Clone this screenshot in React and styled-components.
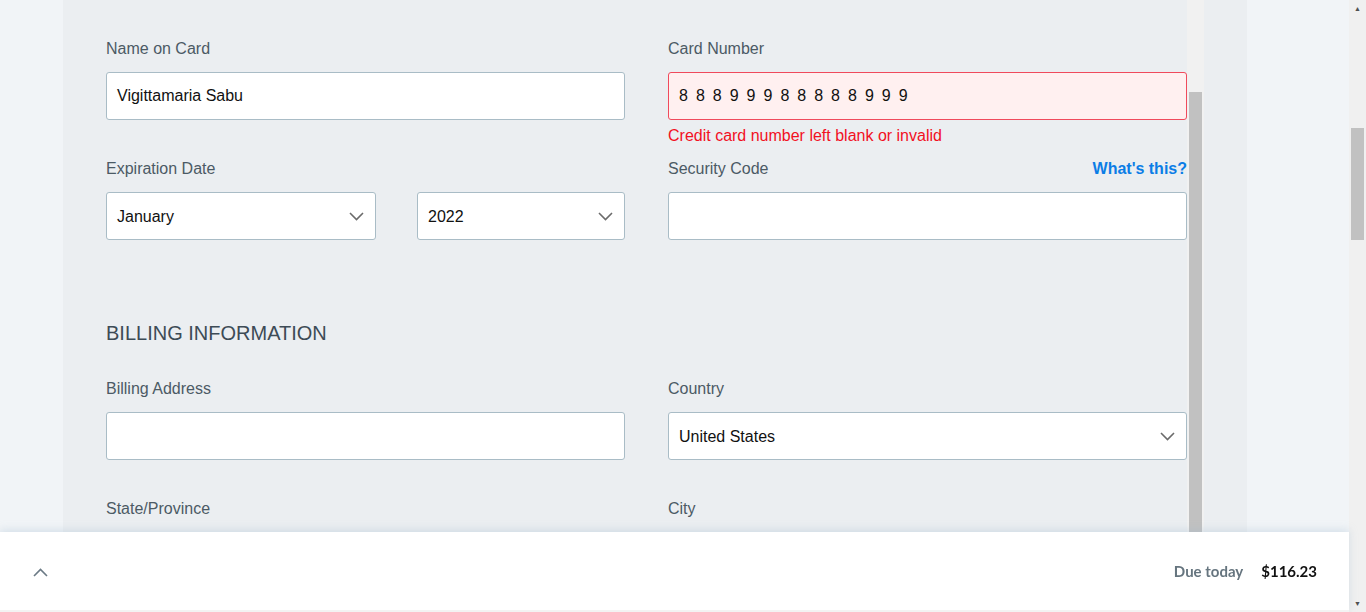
import styled, { createGlobalStyle } from "styled-components";

const GlobalStyle = createGlobalStyle`
  html, body {
    margin: 0;
    padding: 0;
    overflow: hidden;
  }
  body {
    font-family: "Liberation Sans", Arial, sans-serif;
  }
`;

function Chevron({ up }) {
  return (
    <svg width="15" height="9" viewBox="0 0 15 9" fill="none">
      <path
        d={up ? "M1 8L7.5 1.5L14 8" : "M1 1L7.5 7.5L14 1"}
        stroke="currentColor"
        strokeWidth="1.6"
      />
    </svg>
  );
}

function Select({ value }) {
  return (
    <SelectBox>
      <SelectValue>{value}</SelectValue>
      <SelectArrow>
        <Chevron />
      </SelectArrow>
    </SelectBox>
  );
}

export default function App() {
  return (
    <>
      <GlobalStyle />
      <Page>
        <Viewport>
          <Panel>
            <FormArea>
              <FieldGrid>
                <Field>
                  <Label>Name on Card</Label>
                  <Input>Vigittamaria Sabu</Input>
                </Field>
                <Field>
                  <Label>Card Number</Label>
                  <Input invalid spaced>88899988888999</Input>
                  <ErrorText>Credit card number left blank or invalid</ErrorText>
                </Field>
                <Field>
                  <Label>Expiration Date</Label>
                  <DateRow>
                    <Select value="January" />
                    <Select value="2022" />
                  </DateRow>
                </Field>
                <Field>
                  <LabelRow>
                    <Label>Security Code</Label>
                    <HelpLink>What's this?</HelpLink>
                  </LabelRow>
                  <Input />
                </Field>
              </FieldGrid>

              <SectionTitle>BILLING INFORMATION</SectionTitle>

              <FieldGrid>
                <Field>
                  <Label>Billing Address</Label>
                  <Input />
                </Field>
                <Field>
                  <Label>Country</Label>
                  <Select value="United States" />
                </Field>
                <Field>
                  <Label>State/Province</Label>
                  <Input />
                </Field>
                <Field>
                  <Label>City</Label>
                  <Input />
                </Field>
              </FieldGrid>
            </FormArea>
            <InnerScroll>
              <InnerThumb />
            </InnerScroll>
          </Panel>
        </Viewport>
        <PageScroll>
          <ScrollArrow>▲</ScrollArrow>
          <PageThumbTrack>
            <PageThumb />
          </PageThumbTrack>
          <ScrollArrow>▼</ScrollArrow>
        </PageScroll>
        <Footer>
          <Toggle>
            <Chevron up />
          </Toggle>
          <Total>
            <DueLabel>Due today</DueLabel>
            <DueAmount>$116.23</DueAmount>
          </Total>
        </Footer>
      </Page>
    </>
  );
}

const Page = styled.div`
  display: flex;
  height: 612px;
  width: 1366px;
  overflow: hidden;
`;

const Viewport = styled.div`
  flex: 1;
  background: #f1f4f7;
  padding: 0 102px 0 63px;
  overflow: hidden;
`;

const Panel = styled.div`
  display: flex;
  height: 100%;
  background: #ebeef1;
  padding: 0 43px;
`;

const FormArea = styled.div`
  flex: 1;
  padding-top: 37px;
`;

const FieldGrid = styled.div`
  display: grid;
  grid-template-columns: 519px 519px;
  column-gap: 43px;
`;

const Field = styled.div`
  height: 120px;
`;

const Label = styled.div`
  font-size: 16px;
  line-height: 24px;
  color: #4b5a65;
  margin-bottom: 11px;
`;

const LabelRow = styled.div`
  display: flex;
  justify-content: space-between;
  align-items: baseline;
`;

const HelpLink = styled.a`
  font-size: 16px;
  line-height: 24px;
  font-weight: 700;
  color: #0b7de6;
  cursor: pointer;
`;

const Input = styled.div`
  box-sizing: border-box;
  height: 48px;
  display: flex;
  align-items: center;
  padding: 0 10px;
  border: 1px solid ${({ invalid }) => (invalid ? "#f04a5c" : "#a9bcc6")};
  background: ${({ invalid }) => (invalid ? "#fff0f0" : "#ffffff")};
  border-radius: 3px;
  font-size: 16px;
  color: #111;
  letter-spacing: ${({ spaced }) => (spaced ? "8px" : "normal")};
`;

const ErrorText = styled.div`
  margin-top: 6px;
  font-size: 16px;
  line-height: 20px;
  color: #f2101f;
`;

const DateRow = styled.div`
  display: grid;
  grid-template-columns: 270px 208px;
  column-gap: 41px;
`;

const SelectBox = styled.div`
  box-sizing: border-box;
  height: 48px;
  display: flex;
  align-items: center;
  justify-content: space-between;
  padding: 0 11px 0 10px;
  border: 1px solid #a9bcc6;
  background: #ffffff;
  border-radius: 3px;
  font-size: 16px;
  color: #111;
`;

const SelectValue = styled.span`
  padding-top: 2px;
`;

const SelectArrow = styled.span`
  display: flex;
  color: #6b6b6b;
`;

const SectionTitle = styled.h2`
  margin: 42px 0 30px;
  font-size: 20px;
  line-height: 28px;
  font-weight: 400;
  color: #3d4b56;
`;

const InnerScroll = styled.div`
  width: 17px;
  background: #f1f1f1;
  padding: 92px 2px 0;
  box-sizing: border-box;
`;

const InnerThumb = styled.div`
  height: 480px;
  background: #c1c1c1;
`;

const PageScroll = styled.div`
  width: 17px;
  background: #f0f0f0;
  display: flex;
  flex-direction: column;
  align-items: center;
`;

const ScrollArrow = styled.div`
  height: 17px;
  font-size: 7px;
  line-height: 17px;
  color: #505050;
`;

const PageThumbTrack = styled.div`
  flex: 1;
  width: 100%;
  padding: 111px 2px 0;
  box-sizing: border-box;
`;

const PageThumb = styled.div`
  height: 112px;
  background: #c1c1c1;
`;

const Footer = styled.div`
  position: fixed;
  left: 0;
  bottom: 0;
  width: 1349px;
  height: 80px;
  box-sizing: border-box;
  background: #ffffff;
  border-bottom: 2px solid #f3f3f3;
  box-shadow: 0 -2px 8px rgba(160, 185, 205, 0.35);
  display: flex;
  align-items: center;
  justify-content: space-between;
  padding: 0 32px 0 33px;
  font-family: Lato, "Open Sans", sans-serif;
`;

const Toggle = styled.div`
  display: flex;
  color: #6b7a85;
  margin-top: 2px;
`;

const Total = styled.div`
  display: flex;
  align-items: baseline;
  gap: 18px;
  font-size: 15px;
  font-weight: 700;
`;

const DueLabel = styled.span`
  color: #66757f;
`;

const DueAmount = styled.span`
  color: #111;
`;
